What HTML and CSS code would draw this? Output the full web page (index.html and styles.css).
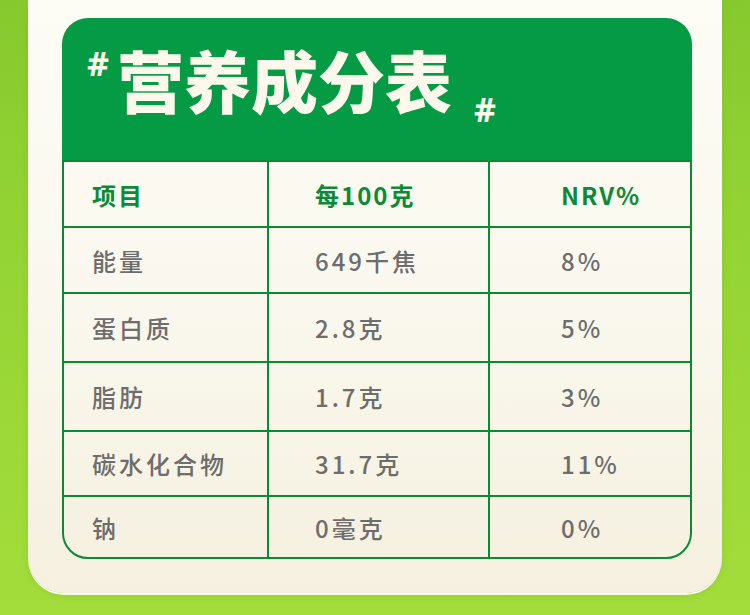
FILE: index.html
```html
<!DOCTYPE html>
<html lang="zh-CN">
<head>
<meta charset="utf-8">
<link rel="stylesheet" href="styles.css">
</head>
<body>
<div class="page">
  <div class="card">
    <div class="head">
      <span class="hash hash-a">#</span>
      <h1 class="title">营养成分表</h1>
      <span class="hash hash-b">#</span>
    </div>
    <div class="table">
      <div class="cell th c1">项目</div>
      <div class="cell th c2">每100克</div>
      <div class="cell th c3">NRV%</div>

      <div class="cell c1">能量</div>
      <div class="cell c2">649千焦</div>
      <div class="cell c3">8%</div>

      <div class="cell c1">蛋白质</div>
      <div class="cell c2">2.8克</div>
      <div class="cell c3">5%</div>

      <div class="cell c1">脂肪</div>
      <div class="cell c2">1.7克</div>
      <div class="cell c3">3%</div>

      <div class="cell c1">碳水化合物</div>
      <div class="cell c2">31.7克</div>
      <div class="cell c3">11%</div>

      <div class="cell c1 last">钠</div>
      <div class="cell c2 last">0毫克</div>
      <div class="cell c3 last">0%</div>
    </div>
  </div>
</div>
</body>
</html>
```
FILE: styles.css
```css
* { box-sizing: border-box; margin: 0; padding: 0; }
html, body { width: 750px; height: 615px; overflow: hidden; }
body {
  background: linear-gradient(180deg, #86c92e 0%, #93d334 35%, #a3dd3c 100%);
  font-family: "Noto Sans CJK SC", "Noto Sans", sans-serif;
}
.page { padding-left: 28px; width: 750px; height: 615px; }
.card {
  width: 694px;
  height: 593px;
  background: linear-gradient(180deg, #fdfcf5 0%, #faf8ee 50%, #f5f0df 100%);
  border-radius: 0 0 36px 36px;
  box-shadow: 0 2px 0 rgba(255,255,255,0.9), 0 3px 6px rgba(120,160,40,0.25);
  padding: 18px 30px 0 34px;
}
.head {
  height: 142px;
  background: #059a44;
  border-radius: 26px 26px 0 0;
  display: flex;
  align-items: flex-start;
  padding: 0 0 0 25px;
  color: #fcf8ec;
}
.hash { font-weight: 700; font-family: "Noto Sans", "Noto Sans CJK SC", sans-serif; line-height: 1; }
.hash-a { font-size: 34px; margin-top: 28px; }
.title {
  font-size: 67px;
  font-weight: 900;
  line-height: 1;
  margin-top: 27px;
  margin-left: 8px;
}
.hash-b { font-size: 34px; margin-top: 74px; margin-left: 22px; }

.table {
  display: grid;
  grid-template-columns: 205px 221px 200px;
  grid-template-rows: 66px 66px 69px 69px 65px 60px;
  border: 2px solid #0b8a33;
  border-radius: 0 0 26px 26px;
  overflow: hidden;
}
.cell {
  display: flex;
  align-items: center;
  font-size: 24px;
  font-weight: 500;
  color: #6d6d6d;
  letter-spacing: 3px;
  border-bottom: 2px solid #0b8a33;
}
.cell.last { border-bottom: none; }
.c1 { padding-left: 28px; border-right: 2px solid #0b8a33; }
.c2 { padding-left: 46px; border-right: 2px solid #0b8a33; }
.c3 { padding-left: 71px; }
.th { color: #0b8b36; font-weight: 700; letter-spacing: 2px; }
```
